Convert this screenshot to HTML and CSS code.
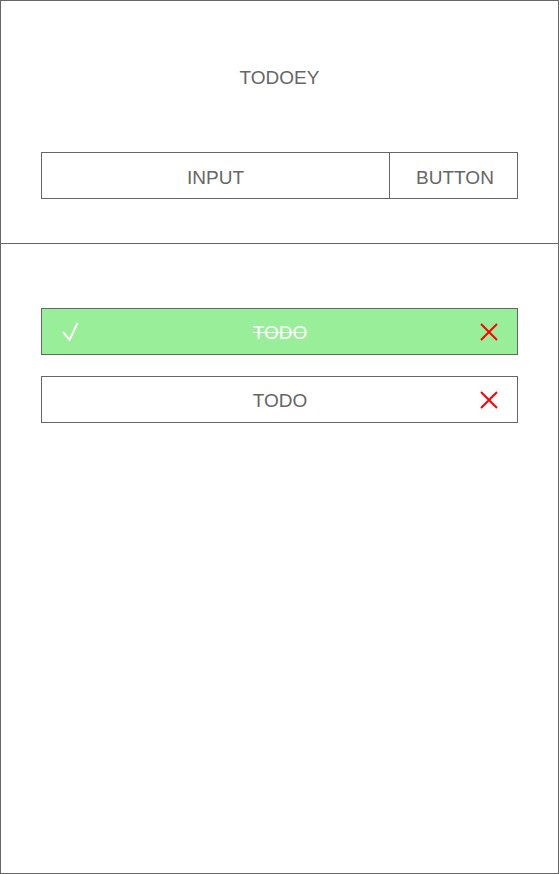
FILE: index.html
```html
<!DOCTYPE html>
<html>
<head>
<meta charset="utf-8">
<link rel="stylesheet" href="styles.css">
</head>
<body>
<div class="app">
  <header class="header">
    <div class="title">TODOEY</div>
    <div class="form">
      <div class="input">INPUT</div>
      <div class="button">BUTTON</div>
    </div>
  </header>
  <main class="list">
    <div class="row done">
      <svg class="check" width="18" height="20" viewBox="0 0 18 20"><polyline points="1,10 7.5,18 15.5,1" fill="none" stroke="#fff" stroke-width="2"/></svg>
      <span class="text">TODO</span>
      <svg class="del" width="18" height="18" viewBox="0 0 18 18"><path d="M1 1 L17 17 M17 1 L1 17" stroke="#f00" stroke-width="2" fill="none"/></svg>
    </div>
    <div class="row">
      <span></span>
      <span class="text">TODO</span>
      <svg class="del" width="18" height="18" viewBox="0 0 18 18"><path d="M1 1 L17 17 M17 1 L1 17" stroke="#f00" stroke-width="2" fill="none"/></svg>
    </div>
  </main>
</div>
</body>
</html>
```
FILE: styles.css
```css
* { box-sizing: border-box; }
body {
  margin: 0;
  font-family: "Liberation Sans", Arial, Helvetica, sans-serif;
  color: #666;
  background: #fff;
}
.app {
  width: 559px;
  height: 874px;
  border: 1px solid #666;
  display: flex;
  flex-direction: column;
}
.header {
  height: 243px;
  border-bottom: 1px solid #666;
  padding: 66px 40px 0;
  flex-shrink: 0;
}
.title {
  font-size: 19px;
  line-height: 22px;
  text-align: center;
}
.form {
  margin-top: 63px;
  display: flex;
  height: 47px;
  border: 1px solid #666;
  font-size: 19px;
}
.input {
  width: 348px;
  display: flex;
  align-items: center;
  justify-content: center;
  border-right: 1px solid #666;
  padding-top: 4px;
}
.button {
  flex: 1;
  display: flex;
  align-items: center;
  justify-content: center;
  padding-top: 4px;
  padding-left: 3px;
}
.list {
  padding: 64px 40px 0;
  display: flex;
  flex-direction: column;
  gap: 21px;
}
.row {
  height: 47px;
  border: 1px solid #666;
  display: grid;
  grid-template-columns: 1fr auto 1fr;
  align-items: center;
  font-size: 19px;
  padding: 0 19px 0 20px;
}
.row .text { padding-top: 3px; }
.row.done { background: #99ee99; }
.row.done .text {
  color: #fff;
  text-decoration: line-through;
}
.check { justify-self: start; }
.del { justify-self: end; }
```
